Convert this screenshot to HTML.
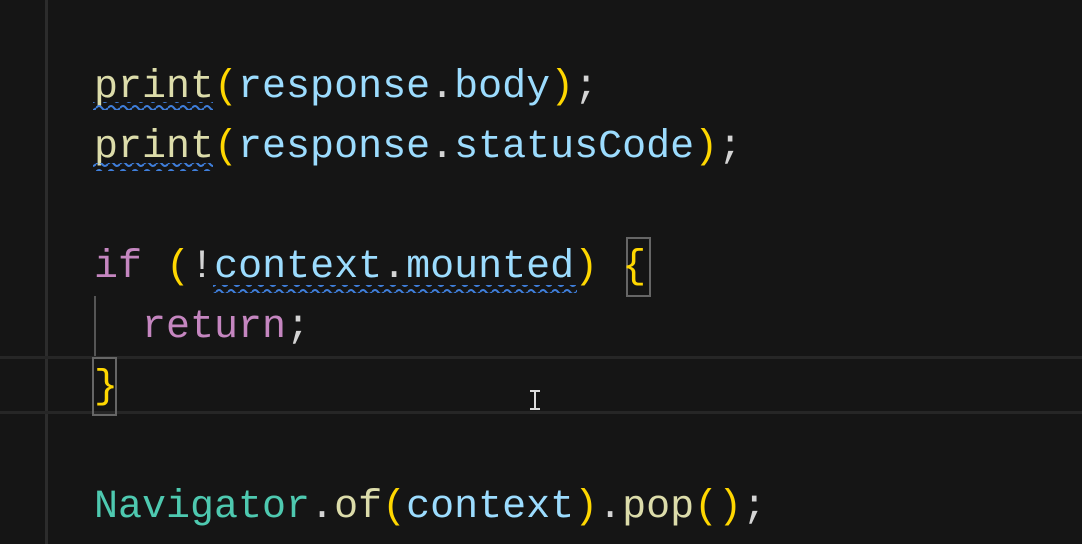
<!DOCTYPE html>
<html><head><style>
html,body{margin:0;padding:0;}
body{width:1082px;height:544px;background:#151515;position:relative;overflow:hidden;font-family:"Liberation Mono",monospace;}
.l{position:absolute;left:94px;height:60px;line-height:60px;font-size:40px;white-space:pre;color:#d4d4d4;}
.f{color:#dcdcaa}.p{color:#ffd700}.v{color:#9cdcfe}.k{color:#c586c0}.c{color:#4ec9b0}
.box{position:absolute;border:2px solid #666;box-sizing:border-box;}
</style></head><body>
<div style="position:absolute;left:45px;top:0;width:3px;height:544px;background:#2c2c2c"></div>
<div style="position:absolute;left:0;top:356px;width:1082px;height:3px;background:#262626"></div>
<div style="position:absolute;left:0;top:411px;width:1082px;height:3px;background:#262626"></div>
<div style="position:absolute;left:94px;top:296px;width:2px;height:60px;background:#555"></div>
<div class="box" style="left:626px;top:237px;width:25px;height:60px"></div>
<div class="box" style="left:92px;top:357px;width:25px;height:59px"></div>
<div class="l" style="top:58px"><span class="f">print</span><span class="p">(</span><span class="v">response</span>.<span class="v">body</span><span class="p">)</span>;</div>
<div class="l" style="top:118px"><span class="f">print</span><span class="p">(</span><span class="v">response</span>.<span class="v">statusCode</span><span class="p">)</span>;</div>
<div class="l" style="top:238px"><span class="k">if</span> <span class="p">(</span>!<span class="v">context</span>.<span class="v">mounted</span><span class="p">)</span> <span class="p">{</span></div>
<div class="l" style="top:298px">  <span class="k">return</span>;</div>
<div class="l" style="top:358px"><span class="p">}</span></div>
<div class="l" style="top:478px"><span class="c">Navigator</span>.<span class="f">of</span><span class="p">(</span><span class="v">context</span><span class="p">)</span>.<span class="f">pop</span><span class="p">()</span>;</div>
<svg style="position:absolute;left:0;top:0" width="1082" height="544">
<defs><pattern id="w" x="0" y="0" width="12" height="8" patternUnits="userSpaceOnUse"><path d="M0 4 Q3 0 6 4 T12 4" fill="none" stroke="#3f7fdc" stroke-width="2"/></pattern></defs>
<rect x="93" y="102" width="120" height="8" fill="url(#w)"/>
<rect x="93" y="163" width="120" height="8" fill="url(#w)"/>
<rect x="213" y="285" width="364" height="8" fill="url(#w)"/>
<path d="M530 391h10M535 391v18M530 409h10" stroke="#ddd" stroke-width="2" fill="none"/>
</svg>
</body></html>
